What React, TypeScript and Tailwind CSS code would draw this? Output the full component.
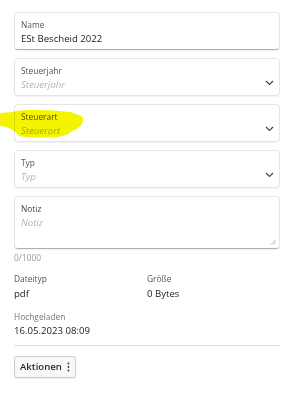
const font = { fontFamily: '"Open Sans", "Noto Sans", Arial, sans-serif' };

const Chevron = () => (
    <svg width="9" height="6" viewBox="0 0 9 6" className="shrink-0">
        <path d="M1 1 L4.5 4.5 L8 1" fill="none" stroke="#444" strokeWidth="1.2" />
    </svg>
);

interface FieldProps {
    label: string;
    value?: string;
    placeholder?: string;
    select?: boolean;
}

const Field = ({ label, value, placeholder, select }: FieldProps) => (
    <div
        className={`h-[38px] rounded-[4px] border border-[#e3e5e8] bg-white pl-[6px] pr-[5px] pt-[5px] flex items-end shadow-[0_1px_1px_rgba(0,0,0,0.06)] ${
            select ? '' : 'border-b-[#aab3bd]'
        }`}
    >
        <div className="flex-1 h-full">
            <div className="text-[8.4px] leading-[13px] text-[#555]">{label}</div>
            {value ? (
                <div className="text-[9.6px] leading-[16px] text-[#222]">{value}</div>
            ) : (
                <div className="text-[9.6px] leading-[16px] italic text-[#b3b3b3]">{placeholder}</div>
            )}
        </div>
        {select && (
            <div className="h-full flex items-center pt-[7px]">
                <Chevron />
            </div>
        )}
    </div>
);

// yellow marker stroke over the Steuerart field
const Highlight = () => (
    <svg
        className="absolute left-0 top-[109px] mix-blend-multiply pointer-events-none"
        width="86"
        height="30"
        viewBox="0 0 86 30"
    >
        <path
            d="M0 4 C6 3 11 4 16 2 C30 0 55 1 70 3 C76 5 81 6 83 9 C84 13 81 19 72 22 C69 25 65 27 57 28 C45 29 30 29 19 27 C16 22 9 18 0 17 Z"
            fill="#f4f400"
        />
    </svg>
);

const App = () => {
    return (
        <div className="relative w-[289px] h-[400px] bg-white overflow-hidden" style={font}>
            <div className="pt-[12px] pl-[14px] pr-[9px] flex flex-col gap-[8px]">
                <Field label="Name" value="ESt Bescheid 2022" />
                <Field label="Steuerjahr" placeholder="Steuerjahr" select />
                <Field label="Steuerart" placeholder="Steuerort" select />
                <Field label="Typ" placeholder="Typ" select />

                {/* Notiz textarea */}
                <div className="relative h-[53px] rounded-[4px] border border-[#e3e5e8] border-b-[#aab3bd] bg-white pl-[6px] pt-[5px] shadow-[0_1px_1px_rgba(0,0,0,0.06)]">
                    <div className="text-[8.4px] leading-[13px] text-[#444]">Notiz</div>
                    <div className="text-[9.6px] leading-[16px] italic text-[#b3b3b3]">Notiz</div>
                    <svg className="absolute right-[3px] bottom-[3px]" width="6" height="6" viewBox="0 0 6 6">
                        <path d="M1 5.5 L5.5 1 M3.5 5.5 L5.5 3.5" stroke="#999" strokeWidth="0.8" />
                    </svg>
                </div>
            </div>

            <div className="pl-[14px] pr-[9px]">
                <div className="mt-[3px] text-[8.4px] leading-[12px] text-[#9a9a9a]">0/1000</div>

                <div className="mt-[9px] grid grid-cols-2">
                    <div>
                        <div className="text-[8.4px] leading-[12px] text-[#555]">Dateityp</div>
                        <div className="mt-[2px] text-[9.6px] leading-[14px] text-[#222]">pdf</div>
                    </div>
                    <div>
                        <div className="text-[8.4px] leading-[12px] text-[#555]">Größe</div>
                        <div className="mt-[2px] text-[9.6px] leading-[14px] text-[#222]">0 Bytes</div>
                    </div>
                </div>

                <div className="mt-[10px] text-[8.4px] leading-[12px] text-[#777]">Hochgeladen</div>
                <div className="mt-[1px] text-[9.6px] leading-[14px] text-[#222]">16.05.2023 08:09</div>

                <div className="mt-[7px] h-px bg-[#dedede]" />

                <button className="mt-[10px] h-[22px] px-[5px] flex items-center gap-[5px] rounded-[3px] border border-[#c9ced4] bg-[#f7f8f9] shadow-[0_1px_1px_rgba(0,0,0,0.08)] text-[9.6px] font-semibold text-[#2a2a2a]">
                    Aktionen
                    <svg width="3" height="10" viewBox="0 0 3 10">
                        <circle cx="1.5" cy="1.5" r="0.9" fill="#333" />
                        <circle cx="1.5" cy="5" r="0.9" fill="#333" />
                        <circle cx="1.5" cy="8.5" r="0.9" fill="#333" />
                    </svg>
                </button>
            </div>

            <Highlight />
        </div>
    );
};

export default App;
